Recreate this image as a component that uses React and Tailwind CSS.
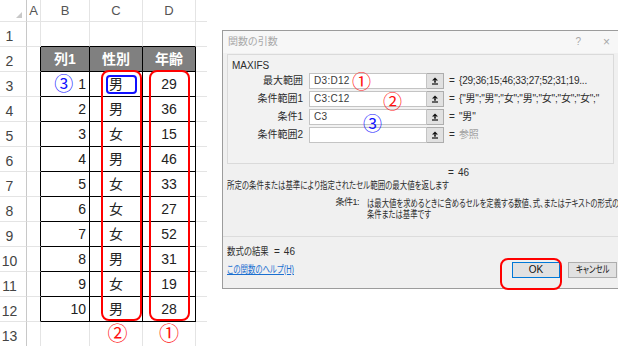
import React from "react";

const rows = [
  [1, "男", 29],
  [2, "男", 36],
  [3, "女", 15],
  [4, "男", 46],
  [5, "女", 33],
  [6, "女", 27],
  [7, "女", 52],
  [8, "男", 31],
  [9, "女", 19],
  [10, "男", 28],
];

const colW = ["w-[27px]", "w-[14px]", "w-[49px]", "w-[53px]", "w-[53px]", "w-[11px]"];
const letters = ["", "A", "B", "C", "D", ""];

function Cell({ r, c, children, className = "" }) {
  const inTableRow = r >= 2 && r <= 12;
  const rightBlack = inTableRow && c >= 1 && c <= 4;
  const bottomBlack = c >= 2 && c <= 4 && r >= 1 && r <= 12;
  const right = c === 5 ? "" : rightBlack ? "border-r border-r-black" : c === 0 ? "border-r border-r-[#c8c8c8]" : "border-r border-r-[#e4e4e4]";
  const bottom = bottomBlack ? "border-b border-b-black" : "border-b border-b-[#e4e4e4]";
  return <div className={`${colW[c]} h-full shrink-0 flex ${right} ${bottom} ${className}`}>{children}</div>;
}

function Sheet() {
  return (
    <div className="relative w-[207px] shrink-0 font-['Liberation_Sans','Noto_Sans_CJK_JP',sans-serif] text-[14px] text-[#222]">
      {/* column header */}
      <div className="flex h-[22px]">
        {letters.map((l, c) => (
          <Cell key={c} r={0} c={c} className="items-center justify-center text-[#555] text-[13px]">
            {c === 0 ? (
              <div className="w-0 h-0 ml-[12px] mt-[8px] border-l-[6px] border-l-transparent border-b-[6px] border-b-[#c8c8c8]" />
            ) : (
              l
            )}
          </Cell>
        ))}
      </div>
      {Array.from({ length: 13 }, (_, i) => {
        const r = i + 1;
        const data = r >= 3 && r <= 12 ? rows[r - 3] : null;
        return (
          <div key={r} className="flex h-[25px]">
            <Cell r={r} c={0} className="items-end justify-center pr-[7px] pb-[3px] leading-none text-[#444]">{r}</Cell>
            <Cell r={r} c={1} />
            {r === 2 ? (
              <>
                <Cell r={r} c={2} className="bg-[#808080] text-white font-bold items-center justify-center">列1</Cell>
                <Cell r={r} c={3} className="bg-[#808080] text-white font-bold items-center justify-center">性別</Cell>
                <Cell r={r} c={4} className="bg-[#808080] text-white font-bold items-center justify-center">年齢</Cell>
              </>
            ) : data ? (
              <>
                <Cell r={r} c={2} className="items-center justify-end pr-[3px] gap-[5px]">
                  {r === 3 && <span className="text-[19px] leading-none text-[#1010ff]">③</span>}
                  {data[0]}
                </Cell>
                <Cell r={r} c={3} className="items-center justify-center">{data[1]}</Cell>
                <Cell r={r} c={4} className="items-center justify-center">{data[2]}</Cell>
              </>
            ) : r === 13 ? (
              <>
                <Cell r={r} c={2} />
                <Cell r={r} c={3} className="items-center justify-center pl-[3px] text-[20px] leading-none text-[#ff1010]">②</Cell>
                <Cell r={r} c={4} className="items-center justify-center text-[20px] leading-none text-[#ff1010]">①</Cell>
              </>
            ) : (
              <>
                <Cell r={r} c={2} />
                <Cell r={r} c={3} />
                <Cell r={r} c={4} />
              </>
            )}
            <Cell r={r} c={5} />
          </div>
        );
      })}
      {/* highlight boxes */}
      <div className="absolute left-[101px] top-[70px] w-[41px] h-[251px] border-2 border-[#ff0000] rounded-[8px]" />
      <div className="absolute left-[149px] top-[70px] w-[41px] h-[251px] border-2 border-[#ff0000] rounded-[8px]" />
      <div className="absolute left-[106px] top-[75px] w-[31px] h-[19px] border-2 border-[#1010ff] rounded-[4px]" />
    </div>
  );
}

function RefIcon() {
  return (
    <svg width="8" height="8" viewBox="0 0 8 8">
      <path d="M4 0.5 L7 3.5 H1 Z" fill="#111" />
      <rect x="3.2" y="3.5" width="1.6" height="2.2" fill="#111" />
      <rect x="1" y="6.4" width="6" height="1.2" fill="#111" />
    </svg>
  );
}

function ArgRow({ label, value, result, muted }) {
  return (
    <div className="flex items-center h-[16px] mb-[2px]">
      <div className="w-[76px] shrink-0 text-right pr-[1px]">{label}</div>
      <div className="ml-[5px] w-[118px] shrink-0 h-full bg-white border border-[#c4c4c4] flex items-center pl-[4px] text-[#3a3a3a] tracking-[0.3px]">{value}</div>
      <div className="w-[17px] shrink-0 h-full bg-[#e1e1e1] border border-[#adadad] border-l-0 flex items-center justify-center">
        <RefIcon />
      </div>
      <div className="ml-[5px] w-[10px] shrink-0">=</div>
      <div className={`whitespace-nowrap tracking-[-0.2px] ${muted ? "text-[#a0a0a0]" : ""}`}>{result}</div>
    </div>
  );
}

function Dialog() {
  return (
    <div className="relative ml-[15px] mt-[30px] w-[397px] h-[259px] shrink-0 border border-[#9c9c9c] bg-[#f0f0f0] font-['Liberation_Sans','Noto_Sans_CJK_JP',sans-serif] text-[10px] leading-none text-[#2c2c2c] [font-feature-settings:'palt']">
      {/* title bar */}
      <div className="h-[22px] bg-[#f7f7f7] flex items-center pl-[5px] pr-[8px] text-[#a8a8a8]">
        <span>関数の引数</span>
        <span className="ml-auto mr-[22px]">?</span>
        <span className="text-[12px]">×</span>
      </div>
      {/* group box */}
      <div className="mx-[4px] mt-[1px] h-[110px] border border-[#dadada] bg-[#f2f2f2] pt-[6px]">
        <div className="pl-[4px] text-[10px] h-[12px]">MAXIFS</div>
        <ArgRow label="最大範囲" value="D3:D12" result="{29;36;15;46;33;27;52;31;19..." />
        <ArgRow label="条件範囲1" value="C3:C12" result={'{"男";"男";"女";"男";"女";"女";"女";"'} />
        <ArgRow label="条件1" value="C3" result={'"男"'} />
        <ArgRow label="条件範囲2" value="" result="参照" muted />
      </div>
      <div className="mt-[4px] pl-[225px] h-[12px] flex">
        <span className="w-[10px]">=</span>
        <span>46</span>
      </div>
      <div className="mt-[1px] pl-[4px] h-[12px] w-[230px] whitespace-nowrap">
        <span className="inline-block origin-left scale-x-[0.745]">所定の条件または基準により指定されたセル範囲の最大値を返します</span>
      </div>
      <div className="mt-[5px] flex whitespace-nowrap">
        <div className="w-[136px] shrink-0 text-right text-[9px] tracking-[-0.5px]">条件1:</div>
        <div className="ml-[8px] w-[249px] shrink-0 leading-[11px]">
          <div className="origin-left scale-x-[0.735]">
            は最大値を求めるときに含めるセルを定義する数値、式、またはテキストの形式の
            <br />
            条件または基準です
          </div>
        </div>
      </div>
      <div className="mt-[16px] border-t border-[#dcdcdc]" />
      <div className="mt-[9px] pl-[4px] h-[12px] flex items-center">
        <span className="w-[42px] whitespace-nowrap">
          <span className="inline-block origin-left scale-x-[0.84]">数式の結果</span>
        </span>
        <span className="ml-[5px]">=</span>
        <span className="ml-[4px]">46</span>
      </div>
      <div className="mt-[4px] flex items-center pl-[4px] pr-[1px]">
        <span className="w-[67px] whitespace-nowrap">
          <span className="inline-block origin-left scale-x-[0.74] text-[#1a6fd0] underline">この関数のヘルプ(H)</span>
        </span>
        <div className="ml-auto w-[48px] h-[16px] bg-[#e1e1e1] border border-[#0078d7] flex items-center justify-center text-[#111]">OK</div>
        <div className="ml-[8px] w-[49px] h-[16px] bg-[#e1e1e1] border border-[#adadad] flex items-center justify-center text-[#111] overflow-hidden">
          <span className="inline-block scale-x-[0.74] whitespace-nowrap">キャンセル</span>
        </div>
      </div>
      {/* annotations */}
      <span className="absolute left-[129px] top-[42px] text-[19px] leading-none text-[#ff1010]">①</span>
      <span className="absolute left-[160px] top-[62px] text-[19px] leading-none text-[#ff1010]">②</span>
      <span className="absolute left-[140px] top-[84px] text-[19px] leading-none text-[#1010ff]">③</span>
      <div className="absolute left-[277px] top-[227px] w-[62px] h-[32px] border-2 border-[#ff0000] rounded-[8px]" />
    </div>
  );
}

export default function App() {
  return (
    <div className="w-[618px] h-[346px] bg-white flex overflow-hidden">
      <Sheet />
      <Dialog />
    </div>
  );
}
